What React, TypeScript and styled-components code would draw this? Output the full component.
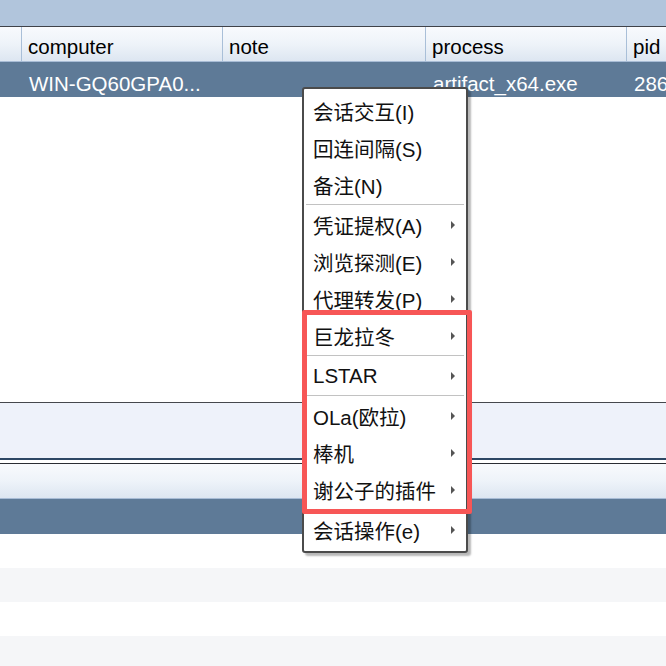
import styled, { createGlobalStyle } from "styled-components";

const GlobalStyle = createGlobalStyle`
  html, body {
    margin: 0;
    padding: 0;
    background: #ffffff;
  }
  body {
    font-family: "Liberation Sans", "Noto Sans CJK SC", sans-serif;
  }
`;

type Column = { title: string; width: number };

const columns: Column[] = [
  { title: "", width: 22 },
  { title: "computer", width: 201 },
  { title: "note", width: 203 },
  { title: "process", width: 201 },
  { title: "pid", width: 60 },
];

const session = ["", "WIN-GQ60GPA0...", "", "artifact_x64.exe", "286"];

type MenuEntry = { label: string; sub?: boolean; spaced?: boolean } | "sep";

const menu: MenuEntry[] = [
  { label: "会话交互(I)" },
  { label: "回连间隔(S)" },
  { label: "备注(N)" },
  "sep",
  { label: "凭证提权(A)", sub: true },
  { label: "浏览探测(E)", sub: true },
  { label: "代理转发(P)", sub: true },
  { label: "巨龙拉冬", sub: true },
  "sep",
  { label: "LSTAR", sub: true },
  "sep",
  { label: "OLa(欧拉)", sub: true },
  { label: "棒机", sub: true },
  { label: "谢公子的插件", sub: true },
  { label: "会话操作(e)", sub: true, spaced: true },
];

export default function App() {
  return (
    <>
      <GlobalStyle />
      <Page>
        <TopBar />
        <Grid>
          <HeaderRow>
            {columns.map((c, i) => (
              <HeadCell key={i} $w={c.width}>{c.title}</HeadCell>
            ))}
          </HeaderRow>
          <SelectedRow>
            {columns.map((c, i) => (
              <Cell key={i} $w={c.width}>{session[i]}</Cell>
            ))}
          </SelectedRow>
          <Filler />
        </Grid>
        <ConsolePanel />
        <Splitter />
        <Grid>
          <HeaderRow>
            {columns.map((c, i) => (
              <HeadCell key={i} $w={c.width} $plain />
            ))}
          </HeaderRow>
          <SelectedRow />
          <StripeRow $alt={false} />
          <StripeRow $alt />
          <StripeRow $alt={false} />
          <StripeRow $alt />
        </Grid>

        <ContextMenu>
          {menu.map((m, i) =>
            m === "sep" ? (
              <Separator key={i} />
            ) : (
              <MenuItem key={i} $spaced={m.spaced}>
                <span>{m.label}</span>
                {m.sub && <Arrow />}
              </MenuItem>
            )
          )}
          <Highlight />
        </ContextMenu>
      </Page>
    </>
  );
}

const Page = styled.div`
  position: relative;
  width: 666px;
  height: 666px;
  overflow: hidden;
  display: flex;
  flex-direction: column;
  font-size: 20.5px;
`;

const TopBar = styled.div`
  height: 26px;
  background: #b1c5dc;
  border-bottom: 1px solid #3f4248;
  flex-shrink: 0;
`;

const Grid = styled.div`
  display: flex;
  flex-direction: column;
  flex-shrink: 0;
`;

const HeaderRow = styled.div`
  display: flex;
  height: 34px;
  background: linear-gradient(#f8fafd, #eef3f9 50%, #dde6f1);
  border-bottom: 1px solid #a8bcd5;
  white-space: nowrap;
`;

const HeadCell = styled.div<{ $w: number; $plain?: boolean }>`
  flex: 0 0 ${(p) => p.$w}px;
  box-sizing: border-box;
  padding-left: 6px;
  line-height: 39px;
  color: #000;
  border-right: ${(p) => (p.$plain ? "none" : "1px solid #a9bfd8")};
  overflow: hidden;
`;

const SelectedRow = styled.div`
  display: flex;
  height: 35px;
  background: #5e7a97;
  white-space: nowrap;
`;

const Cell = styled.div<{ $w: number }>`
  flex: 0 0 ${(p) => p.$w}px;
  box-sizing: border-box;
  padding-left: 7px;
  line-height: 43px;
  color: #ffffff;
  overflow: hidden;
`;

const Filler = styled.div`
  height: 305px;
  background: #ffffff;
`;

const ConsolePanel = styled.div`
  flex-shrink: 0;
  height: 55px;
  background: #eef2fa;
  border-top: 1px solid #45484d;
`;

const Splitter = styled.div`
  flex-shrink: 0;
  height: 3px;
  background: #ffffff;
  border-top: 2px solid #2d4764;
  border-bottom: 1px solid #2a2d33;
`;

const StripeRow = styled.div<{ $alt: boolean }>`
  flex-shrink: 0;
  height: 34px;
  background: ${(p) => (p.$alt ? "#f5f6f8" : "#ffffff")};
`;

const ContextMenu = styled.div`
  position: absolute;
  left: 302px;
  top: 87px;
  width: 162px;
  padding: 3px 0 3px;
  background: #ffffff;
  border: 2px solid #4b4b4b;
  border-radius: 3px;
  box-shadow: 3px 3px 2px rgba(0, 0, 0, 0.28);
  display: flex;
  flex-direction: column;
`;

const MenuItem = styled.div<{ $spaced?: boolean }>`
  height: 37px;
  margin-top: ${(p) => (p.$spaced ? "3px" : "0")};
  display: flex;
  align-items: center;
  justify-content: space-between;
  padding: 0 11px 0 9px;
  color: #111;
  font-size: 20.5px;
  white-space: nowrap;
`;

const Arrow = styled.i`
  width: 0;
  height: 0;
  border-top: 4px solid transparent;
  border-bottom: 4px solid transparent;
  border-left: 4px solid #555;
`;

const Separator = styled.div`
  height: 1px;
  margin: 1px 2px;
  background: #c2c2c2;
`;

const Highlight = styled.div`
  position: absolute;
  left: -2px;
  top: 221px;
  width: 170px;
  height: 204px;
  box-sizing: border-box;
  border: 5px solid #f75656;
  border-radius: 2px;
  pointer-events: none;
`;
